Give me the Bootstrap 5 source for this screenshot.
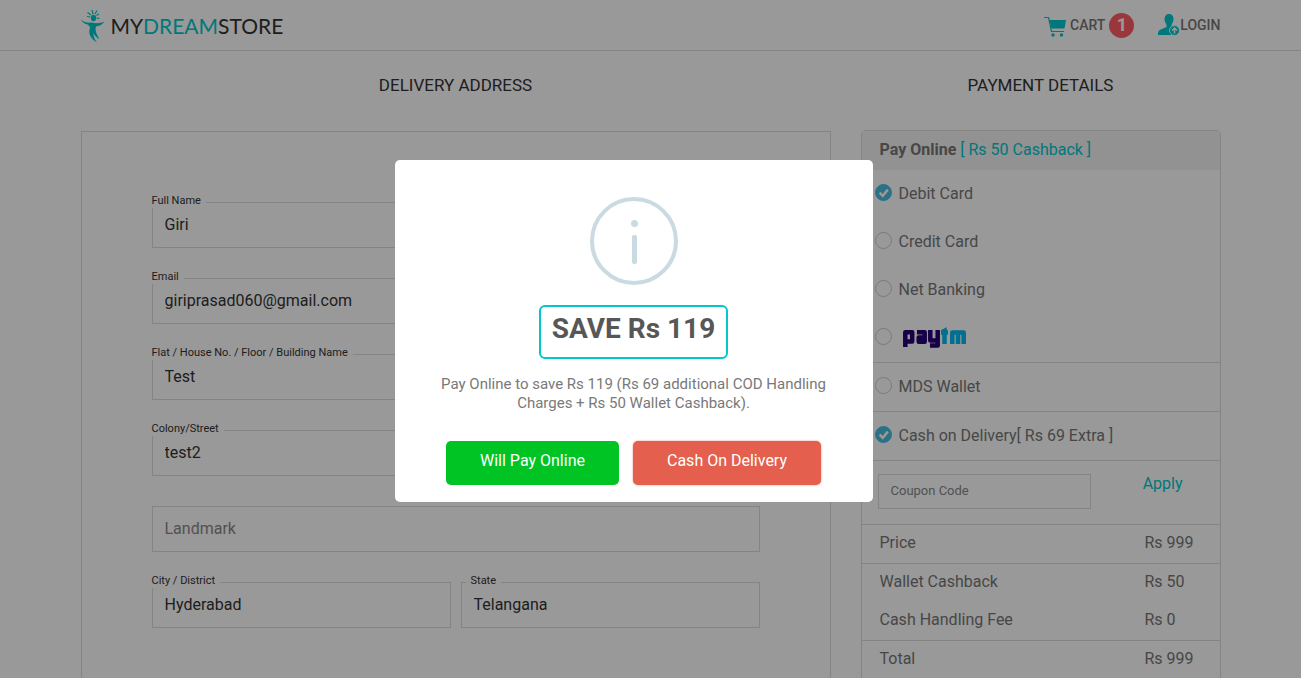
<!DOCTYPE html>
<html lang="en">
<head>
<meta charset="utf-8">
<meta name="viewport" content="width=device-width, initial-scale=1">
<title>MyDreamStore - Checkout</title>
<link href="https://cdn.jsdelivr.net/npm/bootstrap@5.3.0/dist/css/bootstrap.min.css" rel="stylesheet">
<style>
  :root { --teal: #00c8cd; --line: #ddd; --text: #777; }
  body { font-family: Roboto, "Liberation Sans", sans-serif; font-size: 16px; line-height: 20px; color: var(--text); background: #fff; }
  a { color: var(--teal); text-decoration: none; }
  .shop-width { max-width: 1170px; padding: 0 15px; }
  .row { --bs-gutter-x: 30px; }
  .shop-header { height: 51px; border-bottom: 1px solid var(--line); }
  .brand { font-family: Lato, sans-serif; font-size: 21px; color: #333; gap: 6px; padding-top: 1px; }
  .brand b { font-weight: 400; color: var(--teal); }
  .head-link { font-size: 14px; font-weight: 500; color: #777; }
  .count { width: 25px; height: 25px; background: #ff5d66; color: #fff; font-size: 18px; font-weight: 700; }
  .section-title { font-size: 17px; font-weight: 400; line-height: 20px; color: #333; margin: 24px 0 0; padding-bottom: 35px; }
  .address-box { border: 1px solid var(--line); padding: 70px 70px 100px; margin-top: 1px; }
  .address-form { display: grid; gap: 30px; }
  .field label { position: absolute; top: -8px; left: 0; padding-right: 5px; background: #fff; font-size: 11px; line-height: 14px; color: #333; }
  .field label.inset { left: 5px; padding: 0 5px; }
  .field input, .coupon input { width: 100%; height: 46px; border: 1px solid var(--line); border-radius: 0; padding: 0 12px 2px; color: #333; background: #fff; }
  .field input::placeholder, .coupon input::placeholder { color: #888; opacity: 1; }
  .payment { border: 1px solid var(--line); border-radius: 4px; padding-bottom: 60px; }
  .payment-head { height: 39px; padding: 0 18px 1px; background: #f3f3f3; }
  .option { height: 48px; padding-left: 13px; gap: 7px; }
  .option input { appearance: none; flex: none; width: 17px; height: 17px; margin: 0 0 3px; border: 1px solid #ccc; border-radius: 50%; background: #fff; }
  .option input:checked { border-color: #4bbce0; background: #4bbce0 url("data:image/svg+xml,%3Csvg xmlns='http://www.w3.org/2000/svg' viewBox='0 0 16 16'%3E%3Cpath d='M4 8l3 3 5-6' fill='none' stroke='white' stroke-width='2.4'/%3E%3C/svg%3E") center/16px no-repeat; }
  .rule-top { border-top: 1px solid var(--line); }
  .coupon { height: 64px; padding: 13px 16px 0; }
  .coupon input { width: 213px; height: 35px; font-size: 13px; }
  .coupon button { border: 0; background: none; color: var(--teal); padding: 0; margin-right: 21px; height: 20px; }
  .totals { width: 100%; border-collapse: separate; border-spacing: 0; }
  .totals th, .totals td { font-weight: 400; height: 38px; padding: 0 0 2px 18px; }
  .totals .ruled th, .totals .ruled td { height: 39px; border-top: 1px solid var(--line); }
  .totals td { width: 75px; padding-left: 0; }
  .veil { position: fixed; inset: 0; background: rgba(0,0,0,.4); padding: 0 34px 16px 0; z-index: 10; }
  .alert-box { width: 478px; background: #fff; border-radius: 5px; padding: 37px 17px 17px; color: #797979; }
  .save { border: 2px solid var(--teal); border-radius: 6px; height: 54px; padding: 2px 11px; margin: 20px 0 16px; font-size: 28px; line-height: 40px; font-weight: 700; color: #575757; }
  .alert-box p { font-size: 15px; line-height: 19px; margin-bottom: 28px; max-width: 410px; }
  .choice { height: 44px; border: 0; border-radius: 5px; color: #fff; font-size: 16px; padding: 0 24px 4px; white-space: nowrap; }
  .online { background: #00c424; width: 173px; }
  .cod { background: #e55f4e; width: 188px; box-shadow: 0 0 2px rgba(229,95,78,.8); }
</style>
</head>
<body class="overflow-hidden">
<header class="shop-header">
  <div class="container-fluid shop-width h-100 d-flex align-items-center justify-content-between">
    <a href="#" class="brand d-flex align-items-center">
      <svg width="24" height="34" viewBox="0 0 24 34" fill="#00c8cd" aria-hidden="true">
        <ellipse cx="12.500" cy="9" rx="2.600" ry="3.200"/>
        <path d="M12 5 11 1M10 6 6.500 3.500M14 5 16 1.500M9.500 8 6 7.500M15.500 6.500 18 5M15.500 9l3 .5" stroke="#00c8cd" stroke-width="1.200" fill="none"/>
        <path d="M0 10.500C3 13.500 7 14 11 13.500 16 15 20 14 23.500 12.500 21 16 18 17 15 17.500 13.500 21 16 26 18.500 30.500 15 28 13 26 12.500 24 12 27 13.500 30 16 33.500 10 30 7.500 25 8.500 21 9.500 19 9 17 6.500 15.500 3 14.500 1 13 0 10.500Z"/>
      </svg>
      <span>MY<b>DREAM</b>STORE</span>
    </a>
    <nav class="d-flex align-items-center">
      <a href="#" class="head-link d-flex align-items-center me-4">
        <svg class="me-1 mt-1" width="22" height="22" viewBox="0 0 22 22" aria-hidden="true">
          <path d="M0 1.500h4.500L7.500 15.500H20" fill="none" stroke="#00c8cd" stroke-width="1.200"/>
          <path d="M5.500 4H22l-1.500 8.500H7.500Z" fill="#00c8cd"/><circle cx="9" cy="19" r="1.700" fill="#00c8cd"/><circle cx="17.500" cy="19" r="1.700" fill="#00c8cd"/>
        </svg>
        CART <span class="count rounded-circle d-flex align-items-center justify-content-center ms-1">1</span>
      </a>
      <a href="#" class="head-link d-flex align-items-center">
        <svg width="22" height="22" viewBox="0 0 22 22" aria-hidden="true">
          <path d="M11 0c3 0 4.500 2 4.500 5S14 9.500 13.500 11v2l5 3v5H0c0-4 1-5 4-6l4.500-2v-2C8 9.500 6.500 8 6.500 5S8 0 11 0Z" fill="#00c8cd"/>
          <circle cx="16.500" cy="16.500" r="5" fill="#00c8cd" stroke="#fff"/><path d="M16.500 19.500V14M14 16.500l2.500-2.500 2.500 2.500" fill="none" stroke="#fff" stroke-width="1.500"/>
        </svg>
        LOGIN
      </a>
    </nav>
  </div>
</header>

<main class="container-fluid shop-width">
  <div class="row">
    <section class="col-8">
      <h2 class="section-title text-center">DELIVERY ADDRESS</h2>
      <div class="address-box">
        <form class="address-form">
          <div class="field position-relative"><input id="name" type="text" value="Giri"><label for="name">Full Name</label></div>
          <div class="field position-relative"><input id="email" type="email" value="giriprasad060@gmail.com"><label for="email">Email</label></div>
          <div class="field position-relative"><input id="flat" type="text" value="Test"><label for="flat">Flat / House No. / Floor / Building Name</label></div>
          <div class="field position-relative"><input id="street" type="text" value="test2"><label for="street">Colony/Street</label></div>
          <div class="field"><input type="text" placeholder="Landmark" aria-label="Landmark"></div>
          <div class="d-flex" style="gap:10px">
            <div class="field position-relative flex-fill"><input id="city" type="text" value="Hyderabad"><label for="city">City / District</label></div>
            <div class="field position-relative flex-fill"><input id="state" type="text" value="Telangana"><label class="inset" for="state">State</label></div>
          </div>
        </form>
      </div>
    </section>

    <section class="col-4">
      <h2 class="section-title text-center">PAYMENT DETAILS</h2>
      <div class="payment">
        <div class="payment-head d-flex align-items-center gap-1"><strong>Pay Online</strong><a href="#">[ Rs 50 Cashback ]</a></div>
        <label class="option d-flex align-items-center"><input type="radio" name="online" checked>Debit Card</label>
        <label class="option d-flex align-items-center"><input type="radio" name="online">Credit Card</label>
        <label class="option d-flex align-items-center"><input type="radio" name="online">Net Banking</label>
        <label class="option d-flex align-items-center"><input type="radio" name="online" aria-label="Paytm">
          <svg class="ms-1" width="63" height="22" viewBox="0 0 63 22" fill="none" stroke-width="4.500" stroke-linejoin="round" aria-hidden="true">
            <path d="M2.300 20V5.300H9.200V14.500H3M14 5.300H21.700V14.700H15.700V10.500H21M27.300 3V13.500H34M34.700 3V18.500H27" stroke="#260079"/>
            <path d="M41.500 2V17M38 5.500H45M49.300 17V5.500H60.700V17M55 6V17" stroke="#00b9f1"/>
            <path d="M37.500 4 43.500 0V4Z" fill="#00b9f1"/>
          </svg>
        </label>
        <div class="rule-top"><label class="option d-flex align-items-center"><input type="radio" name="mode">MDS Wallet</label></div>
        <div class="rule-top"><label class="option d-flex align-items-center"><input type="radio" name="mode" checked>Cash on Delivery[ Rs 69 Extra ]</label></div>
        <form class="coupon rule-top d-flex justify-content-between">
          <input type="text" placeholder="Coupon Code" aria-label="Coupon Code">
          <button type="button">Apply</button>
        </form>
        <table class="totals">
          <tbody>
            <tr class="ruled"><th scope="row">Price</th><td>Rs 999</td></tr>
            <tr class="ruled"><th scope="row">Wallet Cashback</th><td>Rs 50</td></tr>
            <tr><th scope="row">Cash Handling Fee</th><td>Rs 0</td></tr>
            <tr class="ruled"><th scope="row">Total</th><td>Rs 999</td></tr>
          </tbody>
        </table>
      </div>
    </section>
  </div>
</main>

<div class="veil d-flex align-items-center justify-content-center">
  <div class="alert-box d-flex flex-column align-items-center text-center" role="dialog" aria-modal="true" aria-labelledby="save-title">
    <svg width="88" height="88" viewBox="0 0 88 88" aria-hidden="true">
      <circle cx="44" cy="44" r="42" fill="none" stroke="#c9dae1" stroke-width="4"/>
      <circle cx="44.500" cy="26.500" r="3.500" fill="#c9dae1"/><rect x="42" y="38" width="5" height="29" rx="2" fill="#c9dae1"/>
    </svg>
    <h2 id="save-title" class="save">SAVE Rs 119</h2>
    <p>Pay Online to save Rs 119 (Rs 69 additional COD Handling Charges + Rs 50 Wallet Cashback).</p>
    <div class="d-flex" style="gap:14px">
      <button type="button" class="choice online">Will Pay Online</button>
      <button type="button" class="choice cod">Cash On Delivery</button>
    </div>
  </div>
</div>
<script src="https://cdn.jsdelivr.net/npm/bootstrap@5.3.0/dist/js/bootstrap.bundle.min.js"></script>
</body>
</html>
